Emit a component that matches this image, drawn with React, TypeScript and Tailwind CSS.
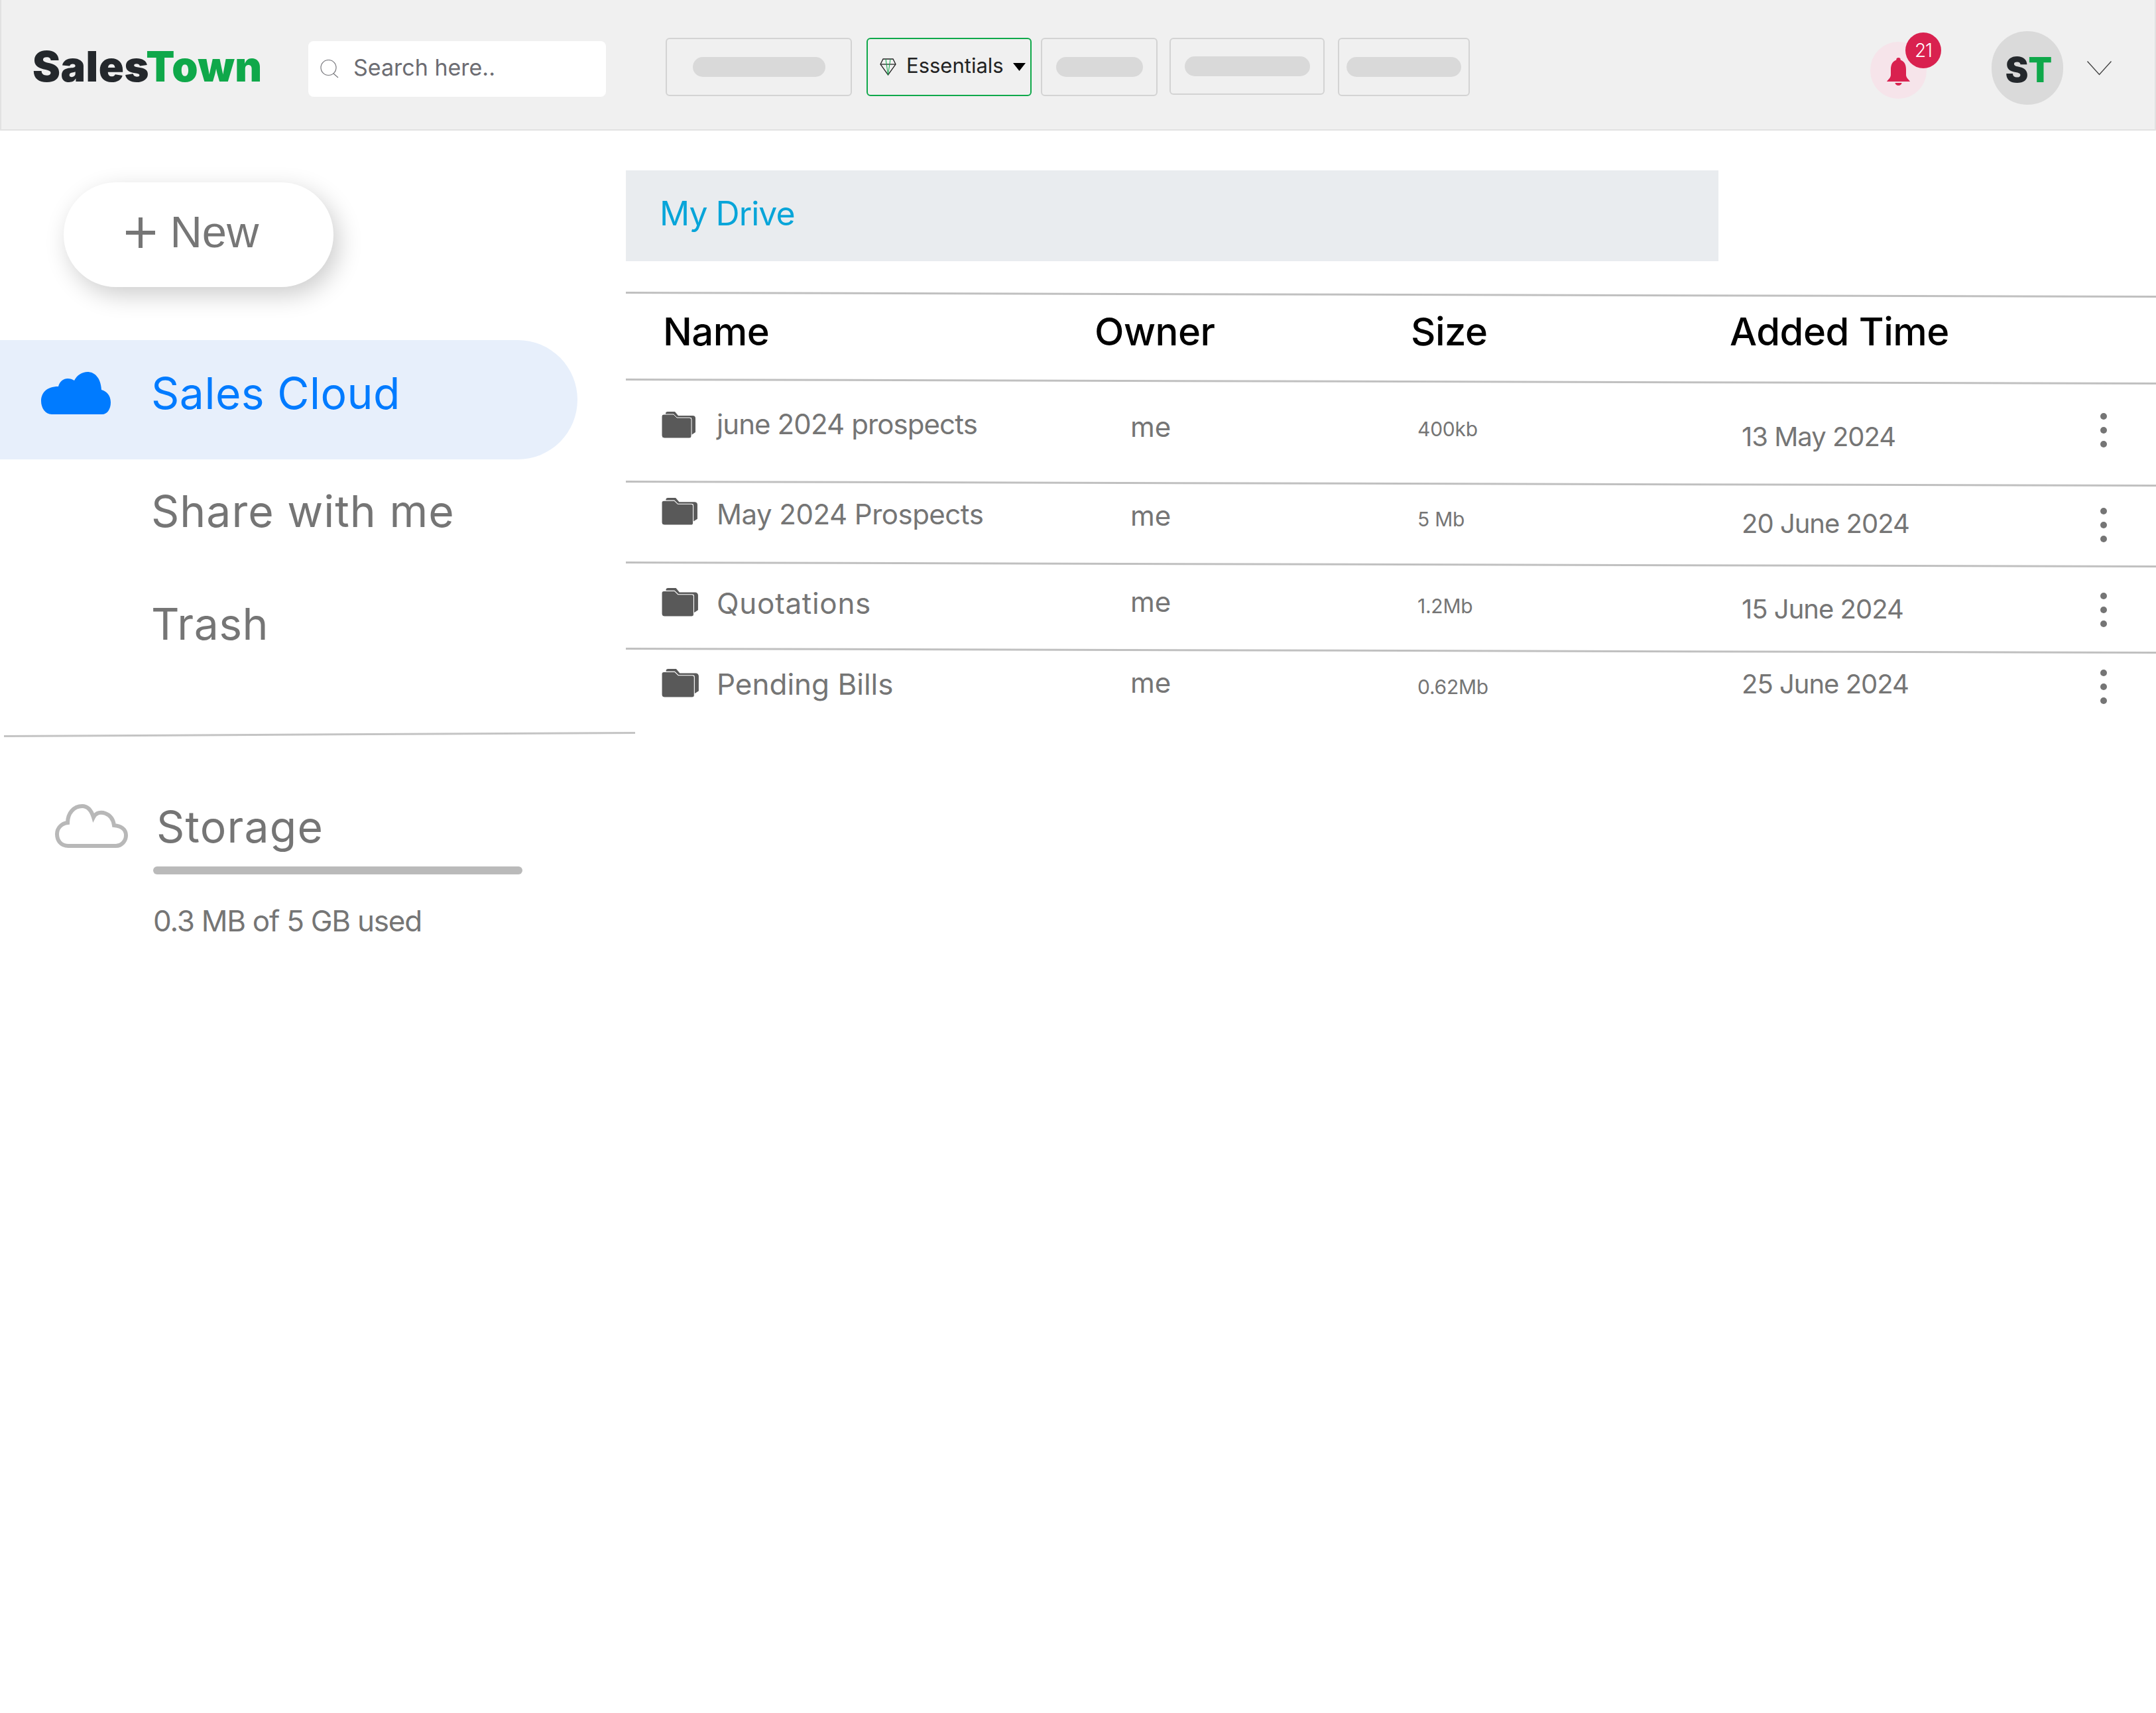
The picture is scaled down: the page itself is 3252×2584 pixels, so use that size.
import { ReactNode } from 'react';

type Row = {
  name: string;
  owner: string;
  size: string;
  added: string;
  height: string;
  folderBox: string;
  nameType: string;
  namePad: string;
  ownerPad: string;
  sizePad: string;
  addedPad: string;
  dotsPad: string;
};

const rows: Row[] = [
  { name: 'june 2024 prospects', owner: 'me', size: '400kb', added: '13 May 2024', height: 'h-[151px]', folderBox: 'mt-[46px] w-[52px] h-[42px]', nameType: 'text-[42px] tracking-[-0.9px]', namePad: 'pt-[41px]', ownerPad: 'pt-[45px]', sizePad: 'pt-[48px]', addedPad: 'pt-[60px]', dotsPad: 'pt-[49px]' },
  { name: 'May 2024 Prospects', owner: 'me', size: '5 Mb', added: '20 June 2024', height: 'h-[119px]', folderBox: 'mt-[22px] w-[55px] h-[43px]', nameType: 'text-[42px] tracking-[-0.5px]', namePad: 'pt-[23px]', ownerPad: 'pt-[25px]', sizePad: 'pt-[30px]', addedPad: 'pt-[37px]', dotsPad: 'pt-[38px]' },
  { name: 'Quotations', owner: 'me', size: '1.2Mb', added: '15 June 2024', height: 'h-[127px]', folderBox: 'mt-[36px] w-[56px] h-[45px]', nameType: 'text-[44px] tracking-[0.7px]', namePad: 'pt-[35px]', ownerPad: 'pt-[33px]', sizePad: 'pt-[39px]', addedPad: 'pt-[44px]', dotsPad: 'pt-[44px]' },
  { name: 'Pending Bills', owner: 'me', size: '0.62Mb', added: '25 June 2024', height: 'h-[127px]', folderBox: 'mt-[28px] w-[57px] h-[45px]', nameType: 'text-[44px] tracking-[0px]', namePad: 'pt-[27px]', ownerPad: 'pt-[25px]', sizePad: 'pt-[31px]', addedPad: 'pt-[27px]', dotsPad: 'pt-[30px]' },
];

function FolderIcon({ className }: { className: string }) {
  return (
    <svg className={className} viewBox="0 0 52 42" preserveAspectRatio="none">
      <path d="M6 4a3 3 0 0 1 3-3h11l5 6h22a4 4 0 0 1 4 4v21l-6 4V10H6Z" fill="#595959" />
      <path d="M0 8a3 3 0 0 1 3-3h15l5 5h19a3 3 0 0 1 3 3v25a3 3 0 0 1-3 3H4a4 4 0 0 1-4-4Z" fill="#595959" stroke="#fff" strokeWidth="1" />
    </svg>
  );
}

function Skeleton({ className, pill }: { className: string; pill: string }) {
  return (
    <div className={`shrink-0 flex items-center justify-center border-2 border-[#d3d3d3] rounded-[6px] ${className}`}>
      <div className={`h-[30px] rounded-full bg-[#d9d9d9] ${pill}`} />
    </div>
  );
}

function TableLine() {
  return <div className="h-[3px] w-[2308px] bg-[#c0c0c0] origin-left rotate-[0.15deg]" />;
}

function HeadCell({ children }: { children: ReactNode }) {
  return <div className="text-[58px] leading-[64px] font-medium text-black tracking-[-0.5px]">{children}</div>;
}

function TopBar() {
  return (
    <header className="flex items-start h-[197px] shrink-0 bg-[#f0f0f0] border-b-2 border-x-2 border-[#e2e2e2]">
      <div className="shrink-0 w-[463px] pl-[47px] pt-[68px] text-[63px] leading-[64px] font-black tracking-[0.5px]">
        <span className="text-[#24282c]">Sales</span>
        <span className="text-[#0fa84a]">Town</span>
      </div>

      <div className="shrink-0 mt-[62px] w-[449px] h-[84px] bg-white rounded-[8px] flex items-center pl-[18px]">
        <svg width="28" height="28" viewBox="0 0 28 28" fill="none" stroke="#77777c" strokeWidth="1.2">
          <circle cx="12.5" cy="12" r="11.5" />
          <path d="M20 21l7 6" />
        </svg>
        <span className="ml-[22px] -mt-[5px] text-[34px] text-[#6c6c72]">Search here..</span>
      </div>

      <Skeleton className="ml-[90px] mt-[57px] w-[281px] h-[88px]" pill="w-[200px]" />

      <div className="shrink-0 ml-[22px] mt-[57px] w-[249px] h-[88px] border-2 border-[#0fa84a] rounded-[6px] flex items-center pl-[18px]">
        <svg width="25" height="26" viewBox="0 0 25 26" fill="none" strokeWidth="1.3">
          <path d="M5 1h15l4 8-11.500 16L1 9Z" stroke="#222" />
          <path d="M1 9h23" stroke="#222" />
          <path d="M9 1 12.500 25M16 1l-3.500 24" stroke="#0fa84a" strokeWidth="1" />
        </svg>
        <span className="ml-[15px] -mt-[3px] text-[31px] text-[#222]">Essentials</span>
        <svg className="ml-[14px]" width="19" height="12" viewBox="0 0 19 12">
          <path d="M0 0h19l-9.500 12Z" fill="#000" />
        </svg>
      </div>

      <Skeleton className="ml-[14px] mt-[57px] w-[176px] h-[88px]" pill="w-[131px]" />
      <Skeleton className="ml-[18px] mt-[57px] w-[234px] h-[86px]" pill="w-[189px]" />
      <Skeleton className="ml-[20px] mt-[57px] w-[199px] h-[88px]" pill="w-[173px]" />

      <div className="relative shrink-0 ml-[604px] mt-[63px] w-[85px] h-[86px] rounded-full bg-[#f6e4ea] flex items-center justify-center">
        <svg className="mt-[4px]" width="35" height="42" viewBox="0 0 35 42">
          <path d="M17.500 0a3.200 3.200 0 0 1 3.200 3.400C27 5.500 29 11 29 18v8c0 4 4 7 6 10H0c2-3 6-6 6-10v-8C6 11 8 5.500 14.300 3.400A3.200 3.200 0 0 1 17.500 0Z" fill="#d9214f" />
          <path d="M12.500 38h10a5 4 0 0 1-10 0Z" fill="#d9214f" />
        </svg>
        <div className="absolute left-[53px] top-[-14px] w-[54px] h-[54px] rounded-full bg-[#d9214f] flex items-center justify-center text-[28px] font-light text-white tracking-[-1px]">
          21
        </div>
      </div>

      <div className="shrink-0 ml-[98px] mt-[47px] w-[108px] h-[111px] rounded-full bg-[#dadada] flex items-center justify-center pt-[6px] pl-[4px] text-[52px] font-black leading-none">
        <span className="text-[#24282c]">S</span>
        <span className="text-[#0fa84a]">T</span>
      </div>

      <svg className="shrink-0 ml-[36px] mt-[92px]" width="37" height="22" viewBox="0 0 37 22" fill="none" stroke="#444" strokeWidth="1.4">
        <path d="M.5.500l18 20 18-20" />
      </svg>
    </header>
  );
}

function Sidebar() {
  return (
    <aside className="shrink-0 w-[944px] text-[#757575]">
      <button className="mt-[78px] ml-[96px] w-[407px] h-[158px] rounded-full bg-white shadow-[8px_12px_36px_rgba(0,0,0,0.2)] flex items-center justify-center pr-[18px] pb-[7px] font-['Liberation_Sans',sans-serif] text-[67px] text-[#767676]">
        <span className="mr-[22px] -mt-[2px] relative w-[44px] h-[44px]">
          <span className="absolute left-0 top-[20px] w-[44px] h-[6px] bg-[#767676]" />
          <span className="absolute left-[19px] top-0 w-[6px] h-[46px] bg-[#767676]" />
        </span>
        New
      </button>

      <div className="mt-[80px] w-[871px] h-[180px] rounded-r-full bg-[#e7effb] flex items-center pl-[62px] pb-[20px]">
        <svg width="106" height="64" viewBox="0 0 106 64">
          <path d="M16 64C6 64 0 54 0 44c0-12 8-22 26-22 2-8 8-12 14-12 4 0 7 1 10 3C54 5 62 0 70 0c10 0 20 8 21 27 8 2 14 9 14 19 0 10-5 18-13 18Z" fill="#007bff" />
        </svg>
        <span className="ml-[60px] text-[66px] text-[#007bff] tracking-[0.5px]">Sales Cloud</span>
      </div>

      <div className="h-[156px] flex items-center pl-[228px] text-[66px] tracking-[1px]">Share with me</div>
      <div className="h-[184px] flex items-center pl-[228px] text-[66px] tracking-[0.5px]">Trash</div>

      <div className="mt-[76px] ml-[6px] w-[952px] h-[3px] bg-[#c4c4c4] origin-left -rotate-[0.3deg]" />

      <div className="mt-[101px] ml-[83px] flex items-start">
        <svg width="110" height="66" viewBox="0 0 110 66" fill="none" stroke="#b8b8b8" strokeWidth="6">
          <path d="M20 63C8 63 3 54 3 45c0-9 7-16 16-17C19 14 28 3 41 3c9 0 14 7 17 17 4-8 12-8 18-6 8 3 12 10 13 18 11 1 18 6 18 15 0 9-7 16-15 16Z" />
        </svg>
        <span className="ml-[43px] mt-[-6px] text-[66px] leading-[80px] tracking-[1.2px]">Storage</span>
      </div>
      <div className="mt-[20px] ml-[231px] w-[557px] h-[12px] rounded-full bg-[#bababa]" />
      <div className="mt-[40px] ml-[231px] text-[44px] leading-[60px] tracking-[-1.25px]">0.3 MB of 5 GB used</div>
    </aside>
  );
}

function DriveTable() {
  return (
    <main className="flex-1 min-w-0">
      <div className="mt-[60px] w-[1648px] h-[137px] bg-[#e9ecef] flex items-center pl-[51px] pb-[6px] text-[50px] text-[#08a5d9] tracking-[-1px]">
        My Drive
      </div>

      <div className="mt-[46px]">
        <TableLine />
        <div className="h-[128px] pl-[56px] pt-[25px] grid grid-cols-[651px_477px_481px_1fr]">
          <HeadCell>Name</HeadCell>
          <HeadCell>Owner</HeadCell>
          <HeadCell>Size</HeadCell>
          <HeadCell>Added Time</HeadCell>
        </div>
        <TableLine />

        {rows.map((row, i) => (
          <div key={row.name}>
            <div className={`grid grid-cols-[761px_433px_489px_541px_1fr] text-[#757575] ${row.height}`}>
              <div className="flex items-start pl-[54px]">
                <div className="shrink-0 w-[83px]">
                  <FolderIcon className={row.folderBox} />
                </div>
                <span className={`leading-[50px] ${row.nameType} ${row.namePad}`}>{row.name}</span>
              </div>
              <div className={`text-[42px] leading-[50px] ${row.ownerPad}`}>{row.owner}</div>
              <div className={`text-[30px] leading-[50px] tracking-[-0.25px] ${row.sizePad}`}>{row.size}</div>
              <div className={`text-[40px] leading-[50px] tracking-[-1px] ${row.addedPad}`}>{row.added}</div>
              <div className={row.dotsPad}>
                <div className="flex flex-col gap-[11px]">
                  <span className="w-[10px] h-[10px] rounded-full bg-[#757575]" />
                  <span className="w-[10px] h-[10px] rounded-full bg-[#757575]" />
                  <span className="w-[10px] h-[10px] rounded-full bg-[#757575]" />
                </div>
              </div>
            </div>
            {i < rows.length - 1 && <TableLine />}
          </div>
        ))}
      </div>
    </main>
  );
}

export default function App() {
  return (
    <div className="w-[3252px] h-[2584px] overflow-hidden bg-white flex flex-col font-[Inter,sans-serif]">
      <TopBar />
      <div className="flex flex-1 min-h-0">
        <Sidebar />
        <DriveTable />
      </div>
    </div>
  );
}
